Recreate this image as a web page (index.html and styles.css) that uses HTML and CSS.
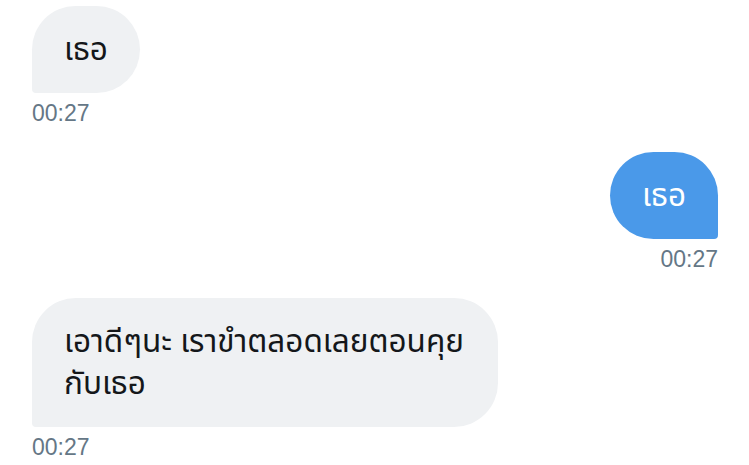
FILE: index.html
```html
<!DOCTYPE html>
<html lang="th">
  <head>
    <meta charset="UTF-8" />
    <meta name="viewport" content="width=device-width, initial-scale=1.0" />
    <title>ข้อความ</title>
    <link rel="stylesheet" href="styles.css">
  </head>
  <body>
    <div class="chat">
      <div class="msg">
        <div class="bubble">เธอ</div>
        <div class="time">00:27</div>
      </div>
      <div class="msg me">
        <div class="bubble">เธอ</div>
        <div class="time">00:27</div>
      </div>
      <div class="msg">
        <div class="bubble">เอาดีๆนะ เราขำตลอดเลยตอนคุย กับเธอ</div>
        <div class="time">00:27</div>
      </div>
    </div>
  </body>
</html>
```

FILE: styles.css
```css
body {
  margin: 0;
  background: white;
  font-family: "Noto Sans Thai", "Noto Sans", "Liberation Sans", sans-serif;
}
.chat {
  display: flex;
  flex-direction: column;
  gap: 26px;
  padding: 6px 31px 0 32px;
}
.msg {
  display: flex;
  flex-direction: column;
  align-items: flex-start;
  gap: 7px;
}
.msg.me {
  align-items: flex-end;
}
.bubble {
  max-width: 402px;
  padding: 24px 32px 21px;
  background-color: rgb(239, 241, 243);
  color: rgb(20, 23, 26);
  font-size: 31.5px;
  line-height: 42px;
  border-radius: 44px 44px 44px 4px;
}
.me .bubble {
  background-color: rgb(74, 153, 233);
  color: white;
  border-radius: 44px 44px 4px 44px;
}
.time {
  color: rgb(101, 119, 134);
  font-family: "Liberation Sans", sans-serif;
  font-size: 23px;
  line-height: 26px;
}
```
